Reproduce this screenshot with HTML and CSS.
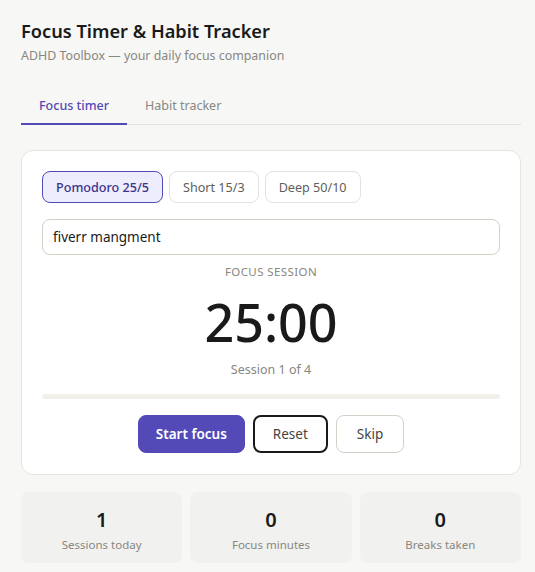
FILE: index.html
```html
<!DOCTYPE html>
<html lang="en">
<head>
<meta charset="utf-8">
<title>Focus Timer & Habit Tracker</title>
<link rel="stylesheet" href="styles.css">
</head>
<body>
<main class="app">
  <header class="head">
    <h1 class="title">Focus Timer &amp; Habit Tracker</h1>
    <p class="subtitle">ADHD Toolbox — your daily focus companion</p>
  </header>
  <nav class="tabs">
    <button class="tab active">Focus timer</button>
    <button class="tab">Habit tracker</button>
  </nav>
  <section class="card">
    <div class="presets">
      <button class="preset selected">Pomodoro 25/5</button>
      <button class="preset">Short 15/3</button>
      <button class="preset">Deep 50/10</button>
    </div>
    <input class="task" type="text" value="fiverr mangment">
    <div class="mode">FOCUS SESSION</div>
    <div class="time">25:00</div>
    <div class="session">Session 1 of 4</div>
    <div class="progress"><div class="fill" style="width:0%"></div></div>
    <div class="actions">
      <button class="btn primary">Start focus</button>
      <button class="btn outline">Reset</button>
      <button class="btn plain">Skip</button>
    </div>
  </section>
  <section class="stats">
    <div class="stat"><div class="num">1</div><div class="lbl">Sessions today</div></div>
    <div class="stat"><div class="num">0</div><div class="lbl">Focus minutes</div></div>
    <div class="stat"><div class="num">0</div><div class="lbl">Breaks taken</div></div>
  </section>
</main>
</body>
</html>
```

FILE: styles.css
```css
* { box-sizing: border-box; }
html, body { margin: 0; padding: 0; }
body {
  background: #f7f7f5;
  font-family: "Noto Sans", "Open Sans", sans-serif;
  color: #1a1a1a;
}
.app {
  width: 500px;
  margin-left: 21px;
  padding-top: 18px;
}
.title {
  margin: 0;
  font-size: 18.2px;
  font-weight: 600;
  line-height: 26px;
}
.subtitle {
  margin: 2px 0 0;
  font-size: 12.4px;
  line-height: 20px;
  color: #888780;
}
.tabs {
  display: flex;
  margin-top: 24px;
  border-bottom: 1px solid #e2e2de;
}
.tab {
  background: none;
  border: none;
  font-family: inherit;
  font-size: 12.5px;
  color: #888780;
  padding: 7px 18px 8px;
  line-height: 18px;
  border-bottom: 2px solid transparent;
  margin-bottom: -1px;
  cursor: pointer;
}
.tab.active {
  color: #534ab7;
  font-weight: 500;
  border-bottom-color: #534ab7;
}
.card {
  margin-top: 25px;
  background: #fff;
  border: 1px solid #e5e5e0;
  border-radius: 12px;
  padding: 20px 20px 21px;
  display: flex;
  flex-direction: column;
  align-items: center;
}
.presets {
  align-self: stretch;
  display: flex;
  gap: 6px;
}
.preset {
  height: 32px;
  padding: 0 13px;
  border-radius: 8px;
  border: 1px solid #e2e2de;
  background: #fff;
  font-family: inherit;
  font-size: 12.6px;
  color: #5f5e5a;
}
.preset.selected {
  background: #eeedfe;
  border-color: #534ab7;
  color: #3c3489;
  font-weight: 500;
}
.task {
  align-self: stretch;
  margin-top: 16px;
  height: 36px;
  border: 1px solid #d3d1c7;
  border-radius: 8px;
  padding: 0 10px;
  font-family: inherit;
  font-size: 13.5px;
  color: #1a1a1a;
  background: #fff;
}
.mode {
  margin-top: 8px;
  font-size: 11.5px;
  line-height: 18px;
  letter-spacing: 0.4px;
  color: #888780;
}
.time {
  margin-top: 5px;
  font-size: 52px;
  font-weight: 500;
  line-height: 72px;
  color: #1a1a1a;
}
.session {
  margin-top: 3px;
  font-size: 12.5px;
  line-height: 18px;
  color: #888780;
}
.progress {
  align-self: stretch;
  margin-top: 15px;
  height: 5px;
  border-radius: 3px;
  background: #f1f0eb;
  overflow: hidden;
}
.fill { height: 100%; background: #534ab7; }
.actions {
  margin-top: 16px;
  display: flex;
  gap: 8px;
}
.btn {
  height: 38px;
  border-radius: 8px;
  font-family: inherit;
  font-size: 13.5px;
  padding: 0 18px;
  background: #fff;
  color: #444441;
}
.btn.primary {
  background: #534ab7;
  border: 1px solid #534ab7;
  color: #fff;
  font-weight: 600;
  padding: 0 17px;
}
.btn.outline { border: 2px solid #1a1a1a; padding: 0 18px; }
.btn.plain { border: 1px solid #d3d1c7; padding: 0 20px; }
.stats {
  margin-top: 17px;
  display: grid;
  grid-template-columns: repeat(3, 1fr);
  gap: 8px;
}
.stat {
  background: #f1f1ef;
  border-radius: 8px;
  height: 71px;
  padding-top: 6px;
  display: flex;
  flex-direction: column;
  align-items: center;
  justify-content: center;
}
.num {
  font-size: 20px;
  font-weight: 600;
  line-height: 26px;
}
.lbl {
  margin-top: 3px;
  font-size: 11.5px;
  line-height: 18px;
  color: #888780;
}
```
